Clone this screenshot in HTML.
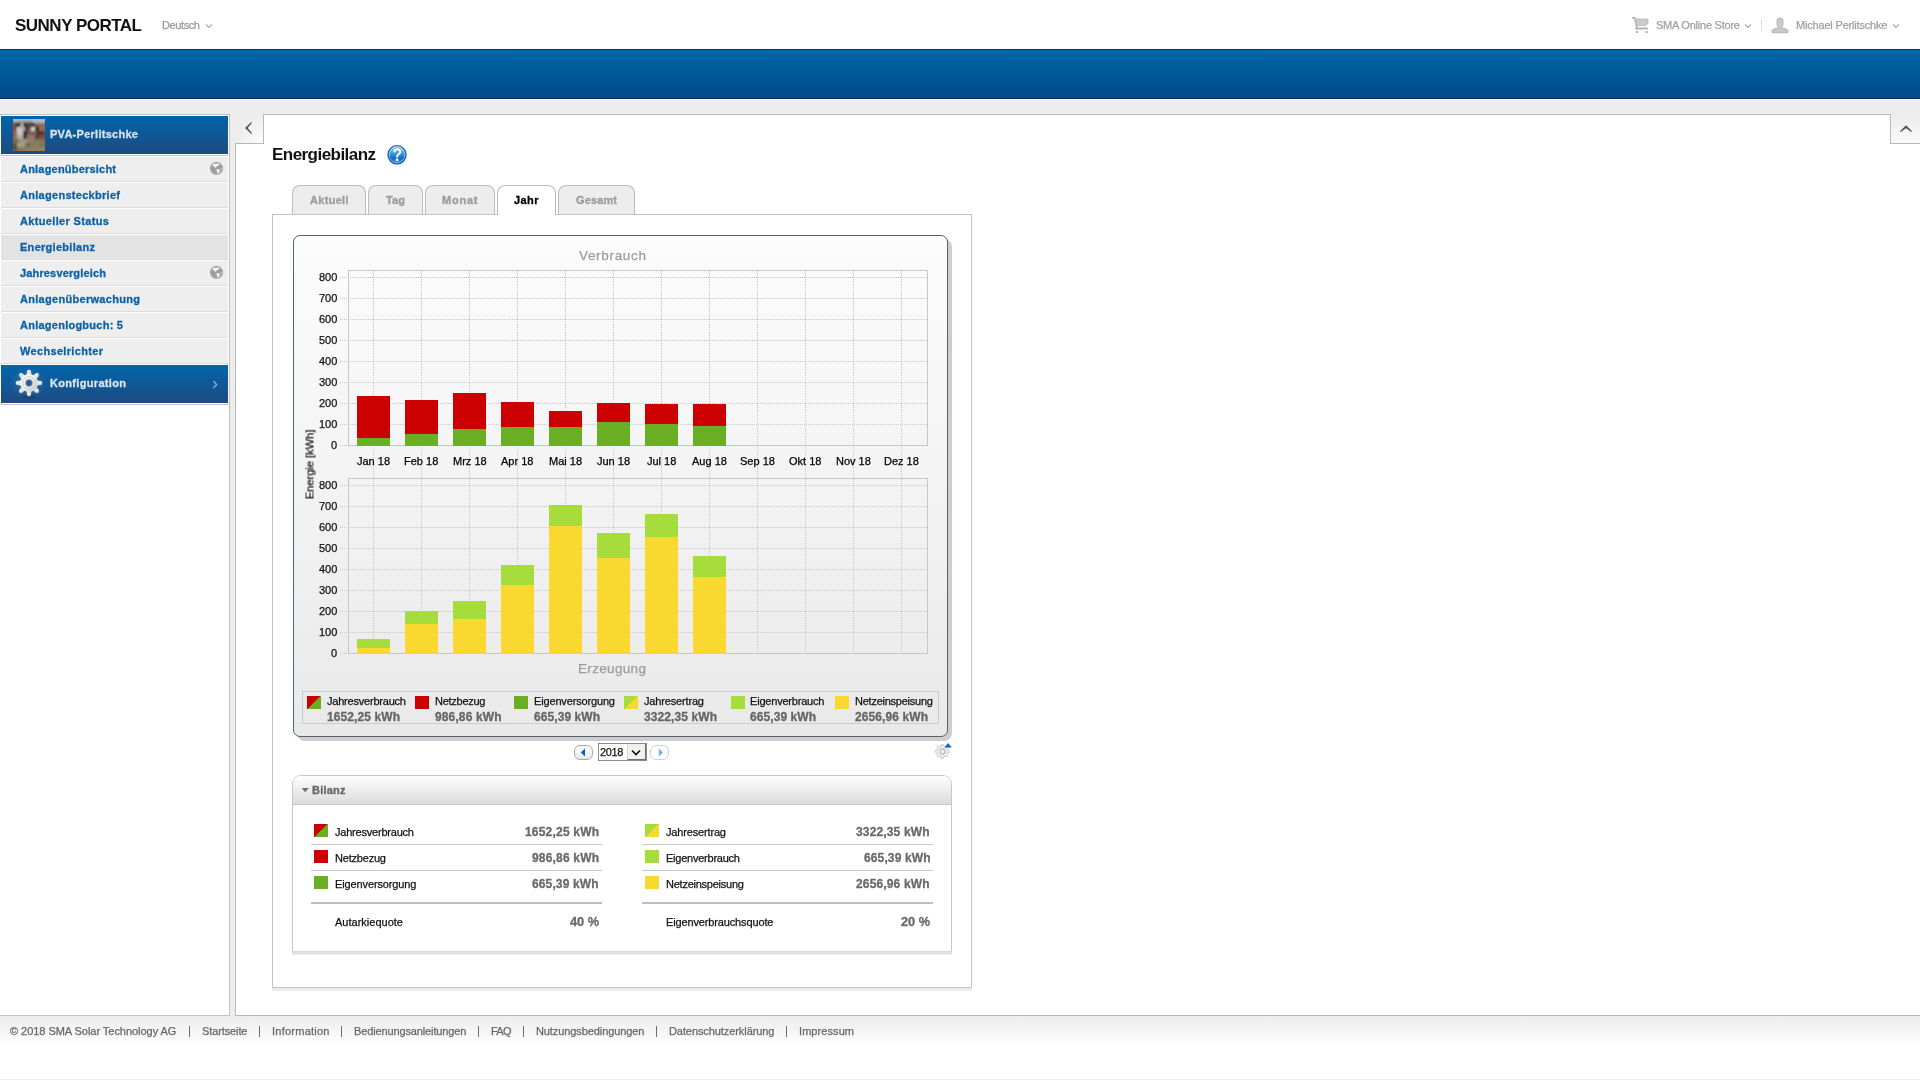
<!DOCTYPE html>
<html><head><meta charset="utf-8"><title>Sunny Portal - Energiebilanz</title>
<style>
html,body{margin:0;padding:0;}
body{width:1920px;height:1080px;position:relative;overflow:hidden;background:#fff;font-family:"Liberation Sans",sans-serif;}
.a{position:absolute;box-sizing:content-box;}
.t{position:absolute;white-space:nowrap;line-height:1;will-change:transform;}
.k{-webkit-text-stroke:0.25px currentColor;}
.kb{-webkit-text-stroke:0.3px currentColor;}
</style></head><body>
<div class="a" style="left:0;top:49px;width:1920px;height:50px;background:linear-gradient(#003a70 0,#003a70 1px,#0065a9 1px,#00609f 25%,#004a87 calc(100% - 1px),#00305f calc(100% - 1px))"></div>
<div class="a" style="left:0;top:100px;width:1920px;height:916px;background:#ededed"></div>
<div class="a" style="left:0;top:1016px;width:1920px;height:63px;background:linear-gradient(#ececec,#ffffff 30px)"></div>
<div class="a" style="left:0;top:1079px;width:1920px;height:1px;background:#f2f2f2"></div>
<div class="a" style="left:-1px;top:114px;width:229px;height:900px;border:1px solid #c2c2c2;background:#fff"></div>
<div class="a" style="left:235px;top:114px;width:1700px;height:900px;border:1px solid #b9b9b9;background:#fff"></div>
<div class="t" style="left:15.00px;top:17.00px;font-size:17px;font-weight:bold;color:#111;letter-spacing:-0.507px;">SUNNY PORTAL</div><div class="t k" style="left:162.00px;top:20.00px;font-size:11px;color:#999;letter-spacing:-0.396px;">Deutsch</div><svg class="a" style="left:205px;top:23px" width="8" height="6" viewBox="0 0 8 6"><path d="M1 1.5 L4 4.5 L7 1.5" fill="none" stroke="#aaa" stroke-width="1.1"/></svg><svg class="a" style="left:1631px;top:16px" width="18" height="18" viewBox="0 0 18 18">
<path d="M1 1 H4 L4.6 2.6 H1 Z" fill="#a8a8a8"/>
<path d="M3.6 1.6 L5.4 9.8" stroke="#b8b8b8" stroke-width="1.6" fill="none"/>
<path d="M5 3 H17 V7.6 L14.2 9.6 H6.2 Z" fill="#cbcbcb" stroke="#b6b6b6" stroke-width="0.8"/>
<path d="M6.2 9.4 L4.8 12.6" stroke="#b8b8b8" stroke-width="1.6" fill="none"/>
<path d="M4.4 11.4 H16.2 Q17.2 11.4 17.2 12.4 Q17.2 13.6 16.2 13.6 H4.4 Z" fill="#b2b2b2"/>
<ellipse cx="6" cy="16" rx="1.3" ry="1.1" fill="#a6a6a6"/><ellipse cx="15.6" cy="16" rx="1.3" ry="1.1" fill="#a6a6a6"/></svg><div class="t k" style="left:1656.00px;top:20.00px;font-size:11px;color:#a0a0a0;letter-spacing:-0.232px;">SMA Online Store</div><svg class="a" style="left:1744px;top:23px" width="8" height="6" viewBox="0 0 8 6"><path d="M1 1.5 L4 4.5 L7 1.5" fill="none" stroke="#aaa" stroke-width="1.1"/></svg><div class="a" style="left:1761px;top:20px;width:0;height:12px;border-left:1px dotted #c8c8c8"></div><svg class="a" style="left:1771px;top:17px" width="18" height="17" viewBox="0 0 18 17">
<path d="M6 3.2 Q6 1.1 9 1.1 Q12 1.1 12 3.2 L12 7 Q12 9 10.6 10 L10.6 10.8 Q12.5 11.4 15 11.9 Q17 12.6 17 14 L17 15.8 L1 15.8 L1 14 Q1 12.6 3 11.9 Q5.5 11.4 7.4 10.8 L7.4 10 Q6 9 6 7 Z" fill="#cacaca" stroke="#b0b0b0" stroke-width="0.9"/></svg><div class="t k" style="left:1796.00px;top:20.00px;font-size:11px;color:#a0a0a0;letter-spacing:-0.182px;">Michael Perlitschke</div><svg class="a" style="left:1892px;top:23px" width="8" height="6" viewBox="0 0 8 6"><path d="M1 1.5 L4 4.5 L7 1.5" fill="none" stroke="#aaa" stroke-width="1.1"/></svg><div class="a" style="left:1px;top:157px;width:227px;height:24px;background:#eeeeee;border-bottom:1px solid #dcdcdc"></div><div class="t kb" style="left:20.00px;top:164.00px;font-size:11px;font-weight:bold;color:#0b61a8;letter-spacing:0.204px;">Anlagenübersicht</div><div class="a" style="left:1px;top:183px;width:227px;height:24px;background:#eeeeee;border-bottom:1px solid #dcdcdc"></div><div class="t kb" style="left:20.00px;top:190.00px;font-size:11px;font-weight:bold;color:#0b61a8;letter-spacing:0.287px;">Anlagensteckbrief</div><div class="a" style="left:1px;top:209px;width:227px;height:24px;background:#eeeeee;border-bottom:1px solid #dcdcdc"></div><div class="t kb" style="left:20.00px;top:216.00px;font-size:11px;font-weight:bold;color:#0b61a8;letter-spacing:0.348px;">Aktueller Status</div><div class="a" style="left:1px;top:235px;width:227px;height:24px;background:#e3e3e3;border-bottom:1px solid #dcdcdc"></div><div class="t kb" style="left:20.00px;top:242.00px;font-size:11px;font-weight:bold;color:#0b61a8;letter-spacing:0.286px;">Energiebilanz</div><div class="a" style="left:1px;top:261px;width:227px;height:24px;background:#eeeeee;border-bottom:1px solid #dcdcdc"></div><div class="t kb" style="left:20.00px;top:268.00px;font-size:11px;font-weight:bold;color:#0b61a8;letter-spacing:0.154px;">Jahresvergleich</div><div class="a" style="left:1px;top:287px;width:227px;height:24px;background:#eeeeee;border-bottom:1px solid #dcdcdc"></div><div class="t kb" style="left:20.00px;top:294.00px;font-size:11px;font-weight:bold;color:#0b61a8;letter-spacing:0.298px;">Anlagenüberwachung</div><div class="a" style="left:1px;top:313px;width:227px;height:24px;background:#eeeeee;border-bottom:1px solid #dcdcdc"></div><div class="t kb" style="left:20.00px;top:320.00px;font-size:11px;font-weight:bold;color:#0b61a8;letter-spacing:0.248px;">Anlagenlogbuch: 5</div><div class="a" style="left:1px;top:339px;width:227px;height:24px;background:#eeeeee;border-bottom:1px solid #dcdcdc"></div><div class="t kb" style="left:20.00px;top:346.00px;font-size:11px;font-weight:bold;color:#0b61a8;letter-spacing:0.331px;">Wechselrichter</div><svg class="a" style="left:209px;top:161px" width="15" height="15" viewBox="0 0 15 15"><circle cx="7.5" cy="7.3" r="6.5" fill="#a0a0a0"/>
<path d="M3.6 3.4 L5.4 2.3 L6.6 3.1 L7.8 2.7 L8.8 2.1 L10.2 2.9 L10.8 3.9 L9.8 4.3 L8.2 5.1 L6.6 6.9 L5.6 6.1 L4 5 Z" fill="#f2f2f2"/>
<path d="M7.6 8.2 L9.2 8 L10.6 9 L11.2 9.8 L10.2 11.2 L9 12.8 L8.2 12.6 L8 10.6 Z" fill="#f2f2f2"/>
<path d="M12 7 L13.2 7.4 L13 8.6 L12.2 8.8 Z" fill="#e4e4e4"/></svg><svg class="a" style="left:209px;top:265px" width="15" height="15" viewBox="0 0 15 15"><circle cx="7.5" cy="7.3" r="6.5" fill="#a0a0a0"/>
<path d="M3.6 3.4 L5.4 2.3 L6.6 3.1 L7.8 2.7 L8.8 2.1 L10.2 2.9 L10.8 3.9 L9.8 4.3 L8.2 5.1 L6.6 6.9 L5.6 6.1 L4 5 Z" fill="#f2f2f2"/>
<path d="M7.6 8.2 L9.2 8 L10.6 9 L11.2 9.8 L10.2 11.2 L9 12.8 L8.2 12.6 L8 10.6 Z" fill="#f2f2f2"/>
<path d="M12 7 L13.2 7.4 L13 8.6 L12.2 8.8 Z" fill="#e4e4e4"/></svg><div class="a" style="left:1px;top:116px;width:227px;height:38px;background:linear-gradient(#0065ab,#1e4a7f)"></div><div class="a" style="left:13px;top:119px;width:32px;height:32px;overflow:hidden;background:#9a7050;filter:saturate(0.7) brightness(0.9)"><svg width="32" height="32" viewBox="0 0 32 32"><defs><filter id="hb" x="-20%" y="-20%" width="140%" height="140%"><feGaussianBlur stdDeviation="1"/></filter></defs><g filter="url(#hb)"><rect x="-4" y="-4" width="40" height="40" fill="#9a7050"/><rect x="-4" y="-4" width="40" height="6" fill="#a8d6f0"/><rect x="-4" y="30" width="40" height="6" fill="#b08858"/><rect x="-4" y="4" width="6" height="24" fill="#b86040"/><rect x="30" y="4" width="6" height="24" fill="#b06048"/><rect x="0" y="0" width="32" height="2" fill="#a8d6f0"/><rect x="0" y="2" width="6" height="2" fill="#b8a89a"/><rect x="6" y="2" width="14" height="2" fill="#a89080"/><rect x="20" y="2" width="12" height="2" fill="#b0d0e0"/><rect x="0" y="4" width="2" height="4" fill="#b05a40"/><rect x="2" y="4" width="2" height="4" fill="#503028"/><rect x="4" y="4" width="4" height="4" fill="#302028"/><rect x="8" y="4" width="2" height="4" fill="#e0e0e0"/><rect x="10" y="4" width="4" height="4" fill="#402830"/><rect x="14" y="4" width="4" height="4" fill="#6a4038"/><rect x="18" y="4" width="4" height="4" fill="#3a3040"/><rect x="22" y="4" width="4" height="4" fill="#a86048"/><rect x="26" y="4" width="6" height="4" fill="#b87050"/><rect x="0" y="8" width="4" height="4" fill="#b05030"/><rect x="4" y="8" width="4" height="4" fill="#e8e4e0"/><rect x="8" y="8" width="4" height="4" fill="#c8c0b8"/><rect x="12" y="8" width="2" height="4" fill="#302838"/><rect x="14" y="8" width="4" height="4" fill="#805040"/><rect x="18" y="8" width="4" height="4" fill="#f0e8e0"/><rect x="22" y="8" width="4" height="4" fill="#302830"/><rect x="26" y="8" width="6" height="4" fill="#c07050"/><rect x="0" y="12" width="4" height="4" fill="#c06040"/><rect x="4" y="12" width="6" height="4" fill="#e0dcd8"/><rect x="10" y="12" width="4" height="4" fill="#202030"/><rect x="14" y="12" width="6" height="4" fill="#a06050"/><rect x="20" y="12" width="4" height="4" fill="#906050"/><rect x="24" y="12" width="4" height="4" fill="#503838"/><rect x="28" y="12" width="4" height="4" fill="#703838"/><rect x="0" y="16" width="4" height="4" fill="#c07040"/><rect x="4" y="16" width="6" height="4" fill="#c8c0b0"/><rect x="10" y="16" width="4" height="4" fill="#403030"/><rect x="14" y="16" width="8" height="4" fill="#b08070"/><rect x="22" y="16" width="4" height="4" fill="#604040"/><rect x="26" y="16" width="6" height="4" fill="#a05040"/><rect x="0" y="20" width="6" height="4" fill="#7a8050"/><rect x="6" y="20" width="8" height="4" fill="#b0a880"/><rect x="14" y="20" width="6" height="4" fill="#a09070"/><rect x="20" y="20" width="6" height="4" fill="#8a8a58"/><rect x="26" y="20" width="6" height="4" fill="#b07850"/><rect x="0" y="24" width="4" height="4" fill="#506038"/><rect x="4" y="24" width="8" height="4" fill="#c0b080"/><rect x="12" y="24" width="6" height="4" fill="#708048"/><rect x="18" y="24" width="8" height="4" fill="#90905a"/><rect x="26" y="24" width="6" height="4" fill="#808850"/><rect x="0" y="28" width="4" height="4" fill="#604830"/><rect x="4" y="28" width="10" height="4" fill="#a08050"/><rect x="14" y="28" width="12" height="4" fill="#b08858"/><rect x="26" y="28" width="6" height="4" fill="#c08850"/></g></svg></div><div class="t kb" style="left:50.00px;top:129.00px;font-size:11px;font-weight:bold;color:#d3e2f1;letter-spacing:0.270px;">PVA-Perlitschke</div><div class="a" style="left:1px;top:155px;width:227px;height:1px;background:#c4c4c4"></div><div class="a" style="left:1px;top:365px;width:227px;height:38px;background:linear-gradient(#0066ac,#1e4a80)"></div><div class="a" style="left:8px;top:368px;width:40px;height:34px;background:radial-gradient(ellipse at 50% 45%,rgba(255,255,255,0.18),rgba(255,255,255,0) 65%)"></div><svg class="a" style="left:15px;top:369px" width="28" height="30" viewBox="0 0 28 30">
<defs><linearGradient id="gg" x1="0" y1="0" x2="1" y2="1"><stop offset="0" stop-color="#ffffff"/><stop offset="0.5" stop-color="#ececec"/><stop offset="1" stop-color="#c4c4c4"/></linearGradient>
<filter id="gs" x="-50%" y="-50%" width="200%" height="200%"><feGaussianBlur stdDeviation="0.9"/></filter></defs>
<ellipse cx="14" cy="27.6" rx="7" ry="1.2" fill="rgba(0,20,50,0.5)" filter="url(#gs)"/>
<g fill="url(#gg)" stroke="#d0d0d0" stroke-width="0.3"><path d="M11.57 5.54 L12.29 2.53 L15.71 2.53 L16.43 5.54 L18.27 6.30 L20.90 4.68 L23.32 7.10 L21.70 9.73 L22.46 11.57 L25.47 12.29 L25.47 15.71 L22.46 16.43 L21.70 18.27 L23.32 20.90 L20.90 23.32 L18.27 21.70 L16.43 22.46 L15.71 25.47 L12.29 25.47 L11.57 22.46 L9.73 21.70 L7.10 23.32 L4.68 20.90 L6.30 18.27 L5.54 16.43 L2.53 15.71 L2.53 12.29 L5.54 11.57 L6.30 9.73 L4.68 7.10 L7.10 4.68 L9.73 6.30 Z"/><circle cx="14.00" cy="2.70" r="1.9"/><circle cx="21.99" cy="6.01" r="1.9"/><circle cx="25.30" cy="14.00" r="1.9"/><circle cx="21.99" cy="21.99" r="1.9"/><circle cx="14.00" cy="25.30" r="1.9"/><circle cx="6.01" cy="21.99" r="1.9"/><circle cx="2.70" cy="14.00" r="1.9"/><circle cx="6.01" cy="6.01" r="1.9"/></g>
<circle cx="14" cy="14" r="6.4" fill="none" stroke="rgba(150,150,150,0.35)" stroke-width="1"/>
<circle cx="14" cy="14" r="3.4" fill="#1d5d9c" stroke="#a0a0a0" stroke-width="0.9"/>
</svg><div class="t kb" style="left:50.00px;top:378.00px;font-size:11px;font-weight:bold;color:#d8e5f2;letter-spacing:0.326px;">Konfiguration</div><svg class="a" style="left:211px;top:380px" width="8" height="9" viewBox="0 0 8 9"><path d="M2.4 1 L5.7 4.5 L2.4 8" fill="none" stroke="#8fb3d8" stroke-width="1.2"/></svg><div class="a" style="left:1px;top:404px;width:227px;height:1px;background:#c4c4c4"></div><div class="a" style="left:235px;top:114px;width:28px;height:29px;border-right:1px solid #b8b8b8;border-bottom:1px solid #b8b8b8;background:radial-gradient(circle at 100% 100%,#fcfcfc 0,#ececec 30px)"></div><svg class="a" style="left:244px;top:121px" width="9" height="14" viewBox="0 0 9 14"><path d="M7.3 0.9 L8.1 1.7 L3.7 7 L8.1 12.3 L7.3 13.1 L1 7 Z" fill="#555"/></svg><div class="a" style="left:1890px;top:114px;width:30px;height:29px;border-left:1px solid #b8b8b8;border-bottom:1px solid #b8b8b8;background:linear-gradient(#ececec,#f9f9f9)"></div><svg class="a" style="left:1899px;top:124px" width="14" height="9" viewBox="0 0 14 9"><path d="M0.9 7.3 L1.7 8.1 L7 4.2 L12.3 8.1 L13.1 7.3 L7 1.2 Z" fill="#555"/></svg><div class="t" style="left:272.00px;top:146.00px;font-size:17px;font-weight:bold;color:#111;letter-spacing:-0.544px;">Energiebilanz</div><svg class="a" style="left:386px;top:144px" width="22" height="23" viewBox="0 0 22 23">
<defs><linearGradient id="hg" x1="0" y1="0" x2="0" y2="1"><stop offset="0" stop-color="#bfe8fb"/><stop offset="0.35" stop-color="#4aa6e6"/><stop offset="0.7" stop-color="#0b6cc6"/><stop offset="1" stop-color="#3e8fd6"/></linearGradient>
<filter id="hs" x="-50%" y="-50%" width="200%" height="200%"><feGaussianBlur stdDeviation="0.8"/></filter></defs>
<ellipse cx="11" cy="20.2" rx="7" ry="1.3" fill="rgba(0,0,0,0.12)" filter="url(#hs)"/>
<circle cx="11" cy="10.8" r="9.1" fill="url(#hg)" stroke="#1c5db4" stroke-width="1.3"/>
<circle cx="11" cy="10.8" r="7.9" fill="none" stroke="rgba(220,245,255,0.55)" stroke-width="0.9"/>
<path d="M8.4 8.3 C8.4 6.1 9.8 5.3 11.3 5.3 C13 5.3 14.2 6.3 14.2 7.8 C14.2 9.4 12.7 9.9 11.9 10.7 C11.3 11.3 11.1 12 11.1 13.4" fill="none" stroke="#3a4a5a" stroke-width="2.6" opacity="0.35" transform="translate(0 -0.4)"/>
<path d="M8.4 8.3 C8.4 6.1 9.8 5.3 11.3 5.3 C13 5.3 14.2 6.3 14.2 7.8 C14.2 9.4 12.7 9.9 11.9 10.7 C11.3 11.3 11.1 12 11.1 13.4" fill="none" stroke="#ffffff" stroke-width="2.1"/>
<rect x="9.9" y="14.6" width="2.4" height="2.4" fill="#fff"/>
</svg><div class="a" style="left:292px;top:185px;width:72px;height:28px;background:#ededed;border:1px solid #bcbcbc;border-bottom:none;border-radius:8px 8px 0 0;box-sizing:content-box;z-index:3"></div><div class="t kb" style="left:310.00px;top:195.00px;font-size:11px;font-weight:bold;color:#9b9b9b;letter-spacing:0.302px;z-index:4;">Aktuell</div><div class="a" style="left:368px;top:185px;width:53px;height:28px;background:#ededed;border:1px solid #bcbcbc;border-bottom:none;border-radius:8px 8px 0 0;box-sizing:content-box;z-index:3"></div><div class="t kb" style="left:386.00px;top:195.00px;font-size:11px;font-weight:bold;color:#9b9b9b;letter-spacing:0.125px;z-index:4;">Tag</div><div class="a" style="left:425px;top:185px;width:68px;height:28px;background:#ededed;border:1px solid #bcbcbc;border-bottom:none;border-radius:8px 8px 0 0;box-sizing:content-box;z-index:3"></div><div class="t kb" style="left:442.00px;top:195.00px;font-size:11px;font-weight:bold;color:#9b9b9b;letter-spacing:0.781px;z-index:4;">Monat</div><div class="a" style="left:497px;top:185px;width:57px;height:29px;background:#ffffff;border:1px solid #bcbcbc;border-bottom:none;border-radius:8px 8px 0 0;box-sizing:content-box;z-index:3"></div><div class="t kb" style="left:514.00px;top:195.00px;font-size:11px;font-weight:bold;color:#000;letter-spacing:0.417px;z-index:4;">Jahr</div><div class="a" style="left:558px;top:185px;width:75px;height:28px;background:#ededed;border:1px solid #bcbcbc;border-bottom:none;border-radius:8px 8px 0 0;box-sizing:content-box;z-index:3"></div><div class="t kb" style="left:576.00px;top:195.00px;font-size:11px;font-weight:bold;color:#9b9b9b;letter-spacing:0.125px;z-index:4;">Gesamt</div><div class="a" style="left:272px;top:214px;width:698px;height:772px;border:1px solid #c3c3c3;background:#fff;z-index:2"></div><div class="a" style="left:272px;top:988px;width:700px;height:3px;background:#ececec;z-index:1"></div><div class="a" style="left:297px;top:239px;width:655px;height:502px;border-radius:8px;background:#cdcdcd;z-index:5"></div><div class="a" style="left:293px;top:235px;width:653px;height:500px;border:1px solid #56626e;border-radius:7px;background:linear-gradient(#fcfcfc,#f4f4f4 45%,#e9e9e9);z-index:6"></div><svg class="a" style="left:0;top:0;z-index:7" width="1000" height="760" viewBox="0 0 1000 760"><line x1="373.5" y1="271" x2="373.5" y2="653" stroke="#c3c8cd" stroke-width="1" stroke-dasharray="1 1"/><line x1="421.5" y1="271" x2="421.5" y2="653" stroke="#c3c8cd" stroke-width="1" stroke-dasharray="1 1"/><line x1="469.5" y1="271" x2="469.5" y2="653" stroke="#c3c8cd" stroke-width="1" stroke-dasharray="1 1"/><line x1="517.5" y1="271" x2="517.5" y2="653" stroke="#c3c8cd" stroke-width="1" stroke-dasharray="1 1"/><line x1="565.5" y1="271" x2="565.5" y2="653" stroke="#c3c8cd" stroke-width="1" stroke-dasharray="1 1"/><line x1="613.5" y1="271" x2="613.5" y2="653" stroke="#c3c8cd" stroke-width="1" stroke-dasharray="1 1"/><line x1="661.5" y1="271" x2="661.5" y2="653" stroke="#c3c8cd" stroke-width="1" stroke-dasharray="1 1"/><line x1="709.5" y1="271" x2="709.5" y2="653" stroke="#c3c8cd" stroke-width="1" stroke-dasharray="1 1"/><line x1="757.5" y1="271" x2="757.5" y2="653" stroke="#c3c8cd" stroke-width="1" stroke-dasharray="1 1"/><line x1="805.5" y1="271" x2="805.5" y2="653" stroke="#c3c8cd" stroke-width="1" stroke-dasharray="1 1"/><line x1="853.5" y1="271" x2="853.5" y2="653" stroke="#c3c8cd" stroke-width="1" stroke-dasharray="1 1"/><line x1="901.5" y1="271" x2="901.5" y2="653" stroke="#c3c8cd" stroke-width="1" stroke-dasharray="1 1"/><line x1="340" y1="445.5" x2="927" y2="445.5" stroke="#c3c8cd" stroke-width="1" stroke-dasharray="1 1"/><line x1="340" y1="424.5" x2="927" y2="424.5" stroke="#c3c8cd" stroke-width="1" stroke-dasharray="1 1"/><line x1="340" y1="403.5" x2="927" y2="403.5" stroke="#c3c8cd" stroke-width="1" stroke-dasharray="1 1"/><line x1="340" y1="382.5" x2="927" y2="382.5" stroke="#c3c8cd" stroke-width="1" stroke-dasharray="1 1"/><line x1="340" y1="361.5" x2="927" y2="361.5" stroke="#c3c8cd" stroke-width="1" stroke-dasharray="1 1"/><line x1="340" y1="340.5" x2="927" y2="340.5" stroke="#c3c8cd" stroke-width="1" stroke-dasharray="1 1"/><line x1="340" y1="319.5" x2="927" y2="319.5" stroke="#c3c8cd" stroke-width="1" stroke-dasharray="1 1"/><line x1="340" y1="298.5" x2="927" y2="298.5" stroke="#c3c8cd" stroke-width="1" stroke-dasharray="1 1"/><line x1="340" y1="277.5" x2="927" y2="277.5" stroke="#c3c8cd" stroke-width="1" stroke-dasharray="1 1"/><line x1="340" y1="653.5" x2="927" y2="653.5" stroke="#c3c8cd" stroke-width="1" stroke-dasharray="1 1"/><line x1="340" y1="632.5" x2="927" y2="632.5" stroke="#c3c8cd" stroke-width="1" stroke-dasharray="1 1"/><line x1="340" y1="611.5" x2="927" y2="611.5" stroke="#c3c8cd" stroke-width="1" stroke-dasharray="1 1"/><line x1="340" y1="590.5" x2="927" y2="590.5" stroke="#c3c8cd" stroke-width="1" stroke-dasharray="1 1"/><line x1="340" y1="569.5" x2="927" y2="569.5" stroke="#c3c8cd" stroke-width="1" stroke-dasharray="1 1"/><line x1="340" y1="548.5" x2="927" y2="548.5" stroke="#c3c8cd" stroke-width="1" stroke-dasharray="1 1"/><line x1="340" y1="527.5" x2="927" y2="527.5" stroke="#c3c8cd" stroke-width="1" stroke-dasharray="1 1"/><line x1="340" y1="506.5" x2="927" y2="506.5" stroke="#c3c8cd" stroke-width="1" stroke-dasharray="1 1"/><line x1="340" y1="485.5" x2="927" y2="485.5" stroke="#c3c8cd" stroke-width="1" stroke-dasharray="1 1"/><rect x="348.5" y="270.5" width="579" height="175" fill="none" stroke="#c0c8d0" stroke-width="1"/><rect x="348.5" y="478.5" width="579" height="175" fill="none" stroke="#c0c8d0" stroke-width="1"/><rect x="357" y="396" width="33" height="50" fill="#cc0000"/><rect x="357" y="438" width="33" height="8" fill="#6aae24"/><rect x="357" y="639" width="33" height="15" fill="#a6dc3b"/><rect x="357" y="648" width="33" height="6" fill="#f9d92f"/><rect x="405" y="400" width="33" height="46" fill="#cc0000"/><rect x="405" y="434" width="33" height="12" fill="#6aae24"/><rect x="405" y="611" width="33" height="43" fill="#a6dc3b"/><rect x="405" y="624" width="33" height="30" fill="#f9d92f"/><rect x="453" y="393" width="33" height="53" fill="#cc0000"/><rect x="453" y="429" width="33" height="17" fill="#6aae24"/><rect x="453" y="601" width="33" height="53" fill="#a6dc3b"/><rect x="453" y="619" width="33" height="35" fill="#f9d92f"/><rect x="501" y="402" width="33" height="44" fill="#cc0000"/><rect x="501" y="427" width="33" height="19" fill="#6aae24"/><rect x="501" y="565" width="33" height="89" fill="#a6dc3b"/><rect x="501" y="585" width="33" height="69" fill="#f9d92f"/><rect x="549" y="411" width="33" height="35" fill="#cc0000"/><rect x="549" y="427" width="33" height="19" fill="#6aae24"/><rect x="549" y="505" width="33" height="149" fill="#a6dc3b"/><rect x="549" y="526" width="33" height="128" fill="#f9d92f"/><rect x="597" y="403" width="33" height="43" fill="#cc0000"/><rect x="597" y="422" width="33" height="24" fill="#6aae24"/><rect x="597" y="533" width="33" height="121" fill="#a6dc3b"/><rect x="597" y="558" width="33" height="96" fill="#f9d92f"/><rect x="645" y="404" width="33" height="42" fill="#cc0000"/><rect x="645" y="424" width="33" height="22" fill="#6aae24"/><rect x="645" y="514" width="33" height="140" fill="#a6dc3b"/><rect x="645" y="537" width="33" height="117" fill="#f9d92f"/><rect x="693" y="404" width="33" height="42" fill="#cc0000"/><rect x="693" y="426" width="33" height="20" fill="#6aae24"/><rect x="693" y="556" width="33" height="98" fill="#a6dc3b"/><rect x="693" y="577" width="33" height="77" fill="#f9d92f"/></svg><div class="t k" style="left:331.00px;top:440.00px;font-size:11px;color:#111;letter-spacing:0.000px;z-index:8;">0</div><div class="t k" style="left:319.00px;top:419.00px;font-size:11px;color:#111;letter-spacing:0.000px;z-index:8;">100</div><div class="t k" style="left:319.00px;top:398.00px;font-size:11px;color:#111;letter-spacing:0.000px;z-index:8;">200</div><div class="t k" style="left:319.00px;top:377.00px;font-size:11px;color:#111;letter-spacing:0.000px;z-index:8;">300</div><div class="t k" style="left:319.00px;top:356.00px;font-size:11px;color:#111;letter-spacing:0.000px;z-index:8;">400</div><div class="t k" style="left:319.00px;top:335.00px;font-size:11px;color:#111;letter-spacing:0.000px;z-index:8;">500</div><div class="t k" style="left:319.00px;top:314.00px;font-size:11px;color:#111;letter-spacing:0.000px;z-index:8;">600</div><div class="t k" style="left:319.00px;top:293.00px;font-size:11px;color:#111;letter-spacing:0.000px;z-index:8;">700</div><div class="t k" style="left:319.00px;top:272.00px;font-size:11px;color:#111;letter-spacing:0.000px;z-index:8;">800</div><div class="t k" style="left:331.00px;top:648.00px;font-size:11px;color:#111;letter-spacing:0.000px;z-index:8;">0</div><div class="t k" style="left:319.00px;top:627.00px;font-size:11px;color:#111;letter-spacing:0.000px;z-index:8;">100</div><div class="t k" style="left:319.00px;top:606.00px;font-size:11px;color:#111;letter-spacing:0.000px;z-index:8;">200</div><div class="t k" style="left:319.00px;top:585.00px;font-size:11px;color:#111;letter-spacing:0.000px;z-index:8;">300</div><div class="t k" style="left:319.00px;top:564.00px;font-size:11px;color:#111;letter-spacing:0.000px;z-index:8;">400</div><div class="t k" style="left:319.00px;top:543.00px;font-size:11px;color:#111;letter-spacing:0.000px;z-index:8;">500</div><div class="t k" style="left:319.00px;top:522.00px;font-size:11px;color:#111;letter-spacing:0.000px;z-index:8;">600</div><div class="t k" style="left:319.00px;top:501.00px;font-size:11px;color:#111;letter-spacing:0.000px;z-index:8;">700</div><div class="t k" style="left:319.00px;top:480.00px;font-size:11px;color:#111;letter-spacing:0.000px;z-index:8;">800</div><div class="t k" style="left:357.00px;top:456.00px;font-size:11px;color:#000;letter-spacing:0.000px;z-index:8;">Jan 18</div><div class="t k" style="left:404.00px;top:456.00px;font-size:11px;color:#000;letter-spacing:0.000px;z-index:8;">Feb 18</div><div class="t k" style="left:453.00px;top:456.00px;font-size:11px;color:#000;letter-spacing:0.000px;z-index:8;">Mrz 18</div><div class="t k" style="left:501.00px;top:456.00px;font-size:11px;color:#000;letter-spacing:0.000px;z-index:8;">Apr 18</div><div class="t k" style="left:549.00px;top:456.00px;font-size:11px;color:#000;letter-spacing:0.000px;z-index:8;">Mai 18</div><div class="t k" style="left:597.00px;top:456.00px;font-size:11px;color:#000;letter-spacing:0.000px;z-index:8;">Jun 18</div><div class="t k" style="left:647.00px;top:456.00px;font-size:11px;color:#000;letter-spacing:0.000px;z-index:8;">Jul 18</div><div class="t k" style="left:692.00px;top:456.00px;font-size:11px;color:#000;letter-spacing:0.000px;z-index:8;">Aug 18</div><div class="t k" style="left:740.00px;top:456.00px;font-size:11px;color:#000;letter-spacing:0.000px;z-index:8;">Sep 18</div><div class="t k" style="left:789.00px;top:456.00px;font-size:11px;color:#000;letter-spacing:0.000px;z-index:8;">Okt 18</div><div class="t k" style="left:836.00px;top:456.00px;font-size:11px;color:#000;letter-spacing:0.000px;z-index:8;">Nov 18</div><div class="t k" style="left:884.00px;top:456.00px;font-size:11px;color:#000;letter-spacing:0.000px;z-index:8;">Dez 18</div><div class="t k" style="left:579.00px;top:249.00px;font-size:13.5px;color:#9c9c9c;letter-spacing:0.678px;z-index:8;">Verbrauch</div><div class="t k" style="left:578.00px;top:662.00px;font-size:13.5px;color:#9c9c9c;letter-spacing:0.332px;z-index:8;">Erzeugung</div><div class="t" style="left:275px;top:458px;width:70px;height:13px;font-size:11.3px;line-height:13px;text-align:center;color:#000;-webkit-text-stroke:0.15px #000;transform:rotate(-90deg);z-index:8;letter-spacing:-0.1px">Energie [kWh]</div><div class="a" style="left:302px;top:691px;width:635px;height:31px;border:1px solid #c6ccd3;z-index:7"></div><div class="a" style="left:307px;top:696px;width:14px;height:13px;background:linear-gradient(135deg,#cc0000 50%,#6aae24 50%);z-index:8"></div><div class="t k" style="left:327.00px;top:696.00px;font-size:11px;color:#111;letter-spacing:-0.212px;z-index:8;">Jahresverbrauch</div><div class="t kb" style="left:327.00px;top:711.00px;font-size:12px;font-weight:bold;color:#666;letter-spacing:0.098px;z-index:8;">1652,25 kWh</div><div class="a" style="left:415px;top:696px;width:14px;height:13px;background:#cc0000;z-index:8"></div><div class="t k" style="left:435.00px;top:696.00px;font-size:11px;color:#111;letter-spacing:-0.266px;z-index:8;">Netzbezug</div><div class="t kb" style="left:435.00px;top:711.00px;font-size:12px;font-weight:bold;color:#666;letter-spacing:0.128px;z-index:8;">986,86 kWh</div><div class="a" style="left:514px;top:696px;width:14px;height:13px;background:#6aae24;z-index:8"></div><div class="t k" style="left:534.00px;top:696.00px;font-size:11px;color:#111;letter-spacing:-0.158px;z-index:8;">Eigenversorgung</div><div class="t kb" style="left:534.00px;top:711.00px;font-size:12px;font-weight:bold;color:#666;letter-spacing:0.073px;z-index:8;">665,39 kWh</div><div class="a" style="left:624px;top:696px;width:14px;height:13px;background:linear-gradient(135deg,#a6dc3b 50%,#f9d92f 50%);z-index:8"></div><div class="t k" style="left:644.00px;top:696.00px;font-size:11px;color:#111;letter-spacing:-0.162px;z-index:8;">Jahresertrag</div><div class="t kb" style="left:644.00px;top:711.00px;font-size:12px;font-weight:bold;color:#666;letter-spacing:0.098px;z-index:8;">3322,35 kWh</div><div class="a" style="left:731px;top:696px;width:14px;height:13px;background:#a6dc3b;z-index:8"></div><div class="t k" style="left:750.00px;top:696.00px;font-size:11px;color:#111;letter-spacing:-0.200px;z-index:8;">Eigenverbrauch</div><div class="t kb" style="left:750.00px;top:711.00px;font-size:12px;font-weight:bold;color:#666;letter-spacing:0.073px;z-index:8;">665,39 kWh</div><div class="a" style="left:835px;top:696px;width:14px;height:13px;background:#f9d92f;z-index:8"></div><div class="t k" style="left:855.00px;top:696.00px;font-size:11px;color:#111;letter-spacing:-0.241px;z-index:8;">Netzeinspeisung</div><div class="t kb" style="left:855.00px;top:711.00px;font-size:12px;font-weight:bold;color:#666;letter-spacing:0.098px;z-index:8;">2656,96 kWh</div><div class="a" style="left:574px;top:745px;width:17px;height:13px;border:1px solid #a8a8a8;border-radius:6px;background:linear-gradient(#fff,#e8e8e8);z-index:8"></div>
<svg class="a" style="left:580px;top:748px;z-index:9" width="6" height="9" viewBox="0 0 6 9"><path d="M5 0.5 L0.8 4.5 L5 8.5 Z" fill="#0b5fb0"/></svg>
<div class="a" style="left:598px;top:743px;width:47px;height:16px;border:1px solid #8a8a8a;background:#fff;z-index:8"></div>
<div class="a" style="left:627px;top:744px;width:19px;height:16px;background:#f0f0f0;border-left:1px solid #d8d8d8;border-right:1px solid #6e6e6e;border-bottom:1px solid #6e6e6e;box-sizing:border-box;z-index:9"></div>
<svg class="a" style="left:631px;top:749px;z-index:10" width="10" height="8" viewBox="0 0 10 8"><path d="M1 1.5 L5 5.5 L9 1.5" fill="none" stroke="#111" stroke-width="1.6"/></svg>
<div class="a" style="left:650px;top:745px;width:17px;height:13px;border:1px solid #d0d0d0;border-radius:6px;background:#fff;z-index:8"></div>
<svg class="a" style="left:658px;top:748px;z-index:9" width="6" height="9" viewBox="0 0 6 9"><path d="M0.8 0.5 L5 4.5 L0.8 8.5 Z" fill="#78acd9"/></svg><div class="t k" style="left:600.00px;top:747.00px;font-size:11px;color:#111;letter-spacing:-0.333px;z-index:10;">2018</div><svg class="a" style="left:935px;top:742px;z-index:9" width="18" height="18" viewBox="0 0 18 18">
<g transform="translate(7.5 9.5)"><path fill="#eee" stroke="#b5b5b5" stroke-width="0.8" d="M-1.3 -6.8 L1.3 -6.8 L1.7 -4.9 L3.2 -4.2 L4.8 -5.4 L6.6 -3.6 L5.4 -2 L5.9 -0.4 L7.8 0 L7.8 2.5 L5.8 2.9 L5.2 4.4 L6.3 6 L4.5 7.8 L2.9 6.7 L1.4 7.3 L1 9.2 L-1.5 9.2 L-1.9 7.2 L-3.4 6.6 L-5 7.8 L-6.8 6 L-5.6 4.3 L-6.2 2.8 L-8.1 2.4 L-8.1 -0.1 L-6.1 -0.5 L-5.5 -2.1 L-6.7 -3.7 L-4.9 -5.5 L-3.3 -4.3 L-1.8 -4.9 Z" transform="scale(0.85) translate(0 -1.2)"/>
<circle r="2.6" fill="none" stroke="#b8b8b8" stroke-width="1.2"/></g>
<path d="M9.5 5.5 L13 1 L16.8 5.5 Z" fill="#0b62c4"/></svg><div class="a" style="left:292px;top:775px;width:658px;height:176px;border:1px solid #c8c8c8;border-bottom:none;border-radius:9px 9px 0 0;background:#fff;z-index:5;overflow:hidden">
<div class="a" style="left:0;top:0;width:658px;height:28px;background:linear-gradient(#fefefe,#f0f0f0 40%,#dcdcdc);border-bottom:1px solid #c6c6c6"></div>
</div>
<div class="a" style="left:292px;top:951px;width:660px;height:4px;background:linear-gradient(#d6d6d6,#ededed);z-index:5"></div><svg class="a" style="left:301px;top:787px;z-index:8" width="9" height="6" viewBox="0 0 9 6"><path d="M0.6 1 H7.8 L4.2 5.2 Z" fill="#707070"/></svg><div class="t kb" style="left:312.00px;top:785.00px;font-size:11px;font-weight:bold;color:#666;letter-spacing:0.219px;z-index:8;">Bilanz</div><div class="a" style="left:314px;top:824px;width:14px;height:13px;background:linear-gradient(135deg,#cc0000 50%,#6aae24 50%);z-index:8"></div><div class="t k" style="left:335.00px;top:827.00px;font-size:11px;color:#111;letter-spacing:-0.212px;z-index:8;">Jahresverbrauch</div><div class="t kb" style="left:525.00px;top:826.00px;font-size:12px;font-weight:bold;color:#6a6a6a;letter-spacing:0.198px;z-index:8;">1652,25 kWh</div><div class="a" style="left:311px;top:844px;width:291px;height:1px;background:#c9c9c9;z-index:8"></div><div class="a" style="left:314px;top:850px;width:14px;height:13px;background:#cc0000;z-index:8"></div><div class="t k" style="left:335.00px;top:853.00px;font-size:11px;color:#111;letter-spacing:-0.203px;z-index:8;">Netzbezug</div><div class="t kb" style="left:532.00px;top:852.00px;font-size:12px;font-weight:bold;color:#6a6a6a;letter-spacing:0.184px;z-index:8;">986,86 kWh</div><div class="a" style="left:311px;top:870px;width:291px;height:1px;background:#c9c9c9;z-index:8"></div><div class="a" style="left:314px;top:876px;width:14px;height:13px;background:#6aae24;z-index:8"></div><div class="t k" style="left:335.00px;top:879.00px;font-size:11px;color:#111;letter-spacing:-0.123px;z-index:8;">Eigenversorgung</div><div class="t kb" style="left:532.00px;top:878.00px;font-size:12px;font-weight:bold;color:#6a6a6a;letter-spacing:0.128px;z-index:8;">665,39 kWh</div><div class="a" style="left:311px;top:902px;width:291px;height:2px;background:#bdbdbd;z-index:8"></div><div class="a" style="left:645px;top:824px;width:14px;height:13px;background:linear-gradient(135deg,#a6dc3b 50%,#f9d92f 50%);z-index:8"></div><div class="t k" style="left:666.00px;top:827.00px;font-size:11px;color:#111;letter-spacing:-0.162px;z-index:8;">Jahresertrag</div><div class="t kb" style="left:856.00px;top:826.00px;font-size:12px;font-weight:bold;color:#6a6a6a;letter-spacing:0.148px;z-index:8;">3322,35 kWh</div><div class="a" style="left:642px;top:844px;width:291px;height:1px;background:#c9c9c9;z-index:8"></div><div class="a" style="left:645px;top:850px;width:14px;height:13px;background:#a6dc3b;z-index:8"></div><div class="t k" style="left:666.00px;top:853.00px;font-size:11px;color:#111;letter-spacing:-0.238px;z-index:8;">Eigenverbrauch</div><div class="t kb" style="left:864.00px;top:852.00px;font-size:12px;font-weight:bold;color:#6a6a6a;letter-spacing:0.128px;z-index:8;">665,39 kWh</div><div class="a" style="left:642px;top:870px;width:291px;height:1px;background:#c9c9c9;z-index:8"></div><div class="a" style="left:645px;top:876px;width:14px;height:13px;background:#f9d92f;z-index:8"></div><div class="t k" style="left:666.00px;top:879.00px;font-size:11px;color:#111;letter-spacing:-0.241px;z-index:8;">Netzeinspeisung</div><div class="t kb" style="left:856.00px;top:878.00px;font-size:12px;font-weight:bold;color:#6a6a6a;letter-spacing:0.148px;z-index:8;">2656,96 kWh</div><div class="a" style="left:642px;top:902px;width:291px;height:2px;background:#bdbdbd;z-index:8"></div><div class="t k" style="left:335.00px;top:917.00px;font-size:11px;color:#111;letter-spacing:0.005px;z-index:8;">Autarkiequote</div><div class="t kb" style="left:570.00px;top:916.00px;font-size:12.8px;font-weight:bold;color:#6a6a6a;letter-spacing:0.000px;z-index:8;">40 %</div><div class="t k" style="left:666.00px;top:917.00px;font-size:11px;color:#111;letter-spacing:-0.140px;z-index:8;">Eigenverbrauchsquote</div><div class="t kb" style="left:901.00px;top:916.00px;font-size:12.8px;font-weight:bold;color:#6a6a6a;letter-spacing:0.000px;z-index:8;">20 %</div><div class="t k" style="left:10.00px;top:1026.00px;font-size:11px;color:#666;letter-spacing:-0.039px;">© 2018 SMA Solar Technology AG</div><div class="a" style="left:188.5px;top:1026px;width:1px;height:11px;background:#6e6e6e"></div><div class="t k" style="left:202.00px;top:1026.00px;font-size:11px;color:#666;letter-spacing:-0.111px;">Startseite</div><div class="a" style="left:259.0px;top:1026px;width:1px;height:11px;background:#6e6e6e"></div><div class="t k" style="left:272.00px;top:1026.00px;font-size:11px;color:#666;letter-spacing:0.244px;">Information</div><div class="a" style="left:341.0px;top:1026px;width:1px;height:11px;background:#6e6e6e"></div><div class="t k" style="left:354.00px;top:1026.00px;font-size:11px;color:#666;letter-spacing:-0.130px;">Bedienungsanleitungen</div><div class="a" style="left:478.0px;top:1026px;width:1px;height:11px;background:#6e6e6e"></div><div class="t k" style="left:491.00px;top:1026.00px;font-size:11px;color:#666;letter-spacing:-0.758px;">FAQ</div><div class="a" style="left:523.0px;top:1026px;width:1px;height:11px;background:#6e6e6e"></div><div class="t k" style="left:536.00px;top:1026.00px;font-size:11px;color:#666;letter-spacing:-0.094px;">Nutzungsbedingungen</div><div class="a" style="left:656.0px;top:1026px;width:1px;height:11px;background:#6e6e6e"></div><div class="t k" style="left:669.00px;top:1026.00px;font-size:11px;color:#666;letter-spacing:-0.082px;">Datenschutzerklärung</div><div class="a" style="left:786.0px;top:1026px;width:1px;height:11px;background:#6e6e6e"></div><div class="t k" style="left:799.00px;top:1026.00px;font-size:11px;color:#666;letter-spacing:0.074px;">Impressum</div>
</body></html>
